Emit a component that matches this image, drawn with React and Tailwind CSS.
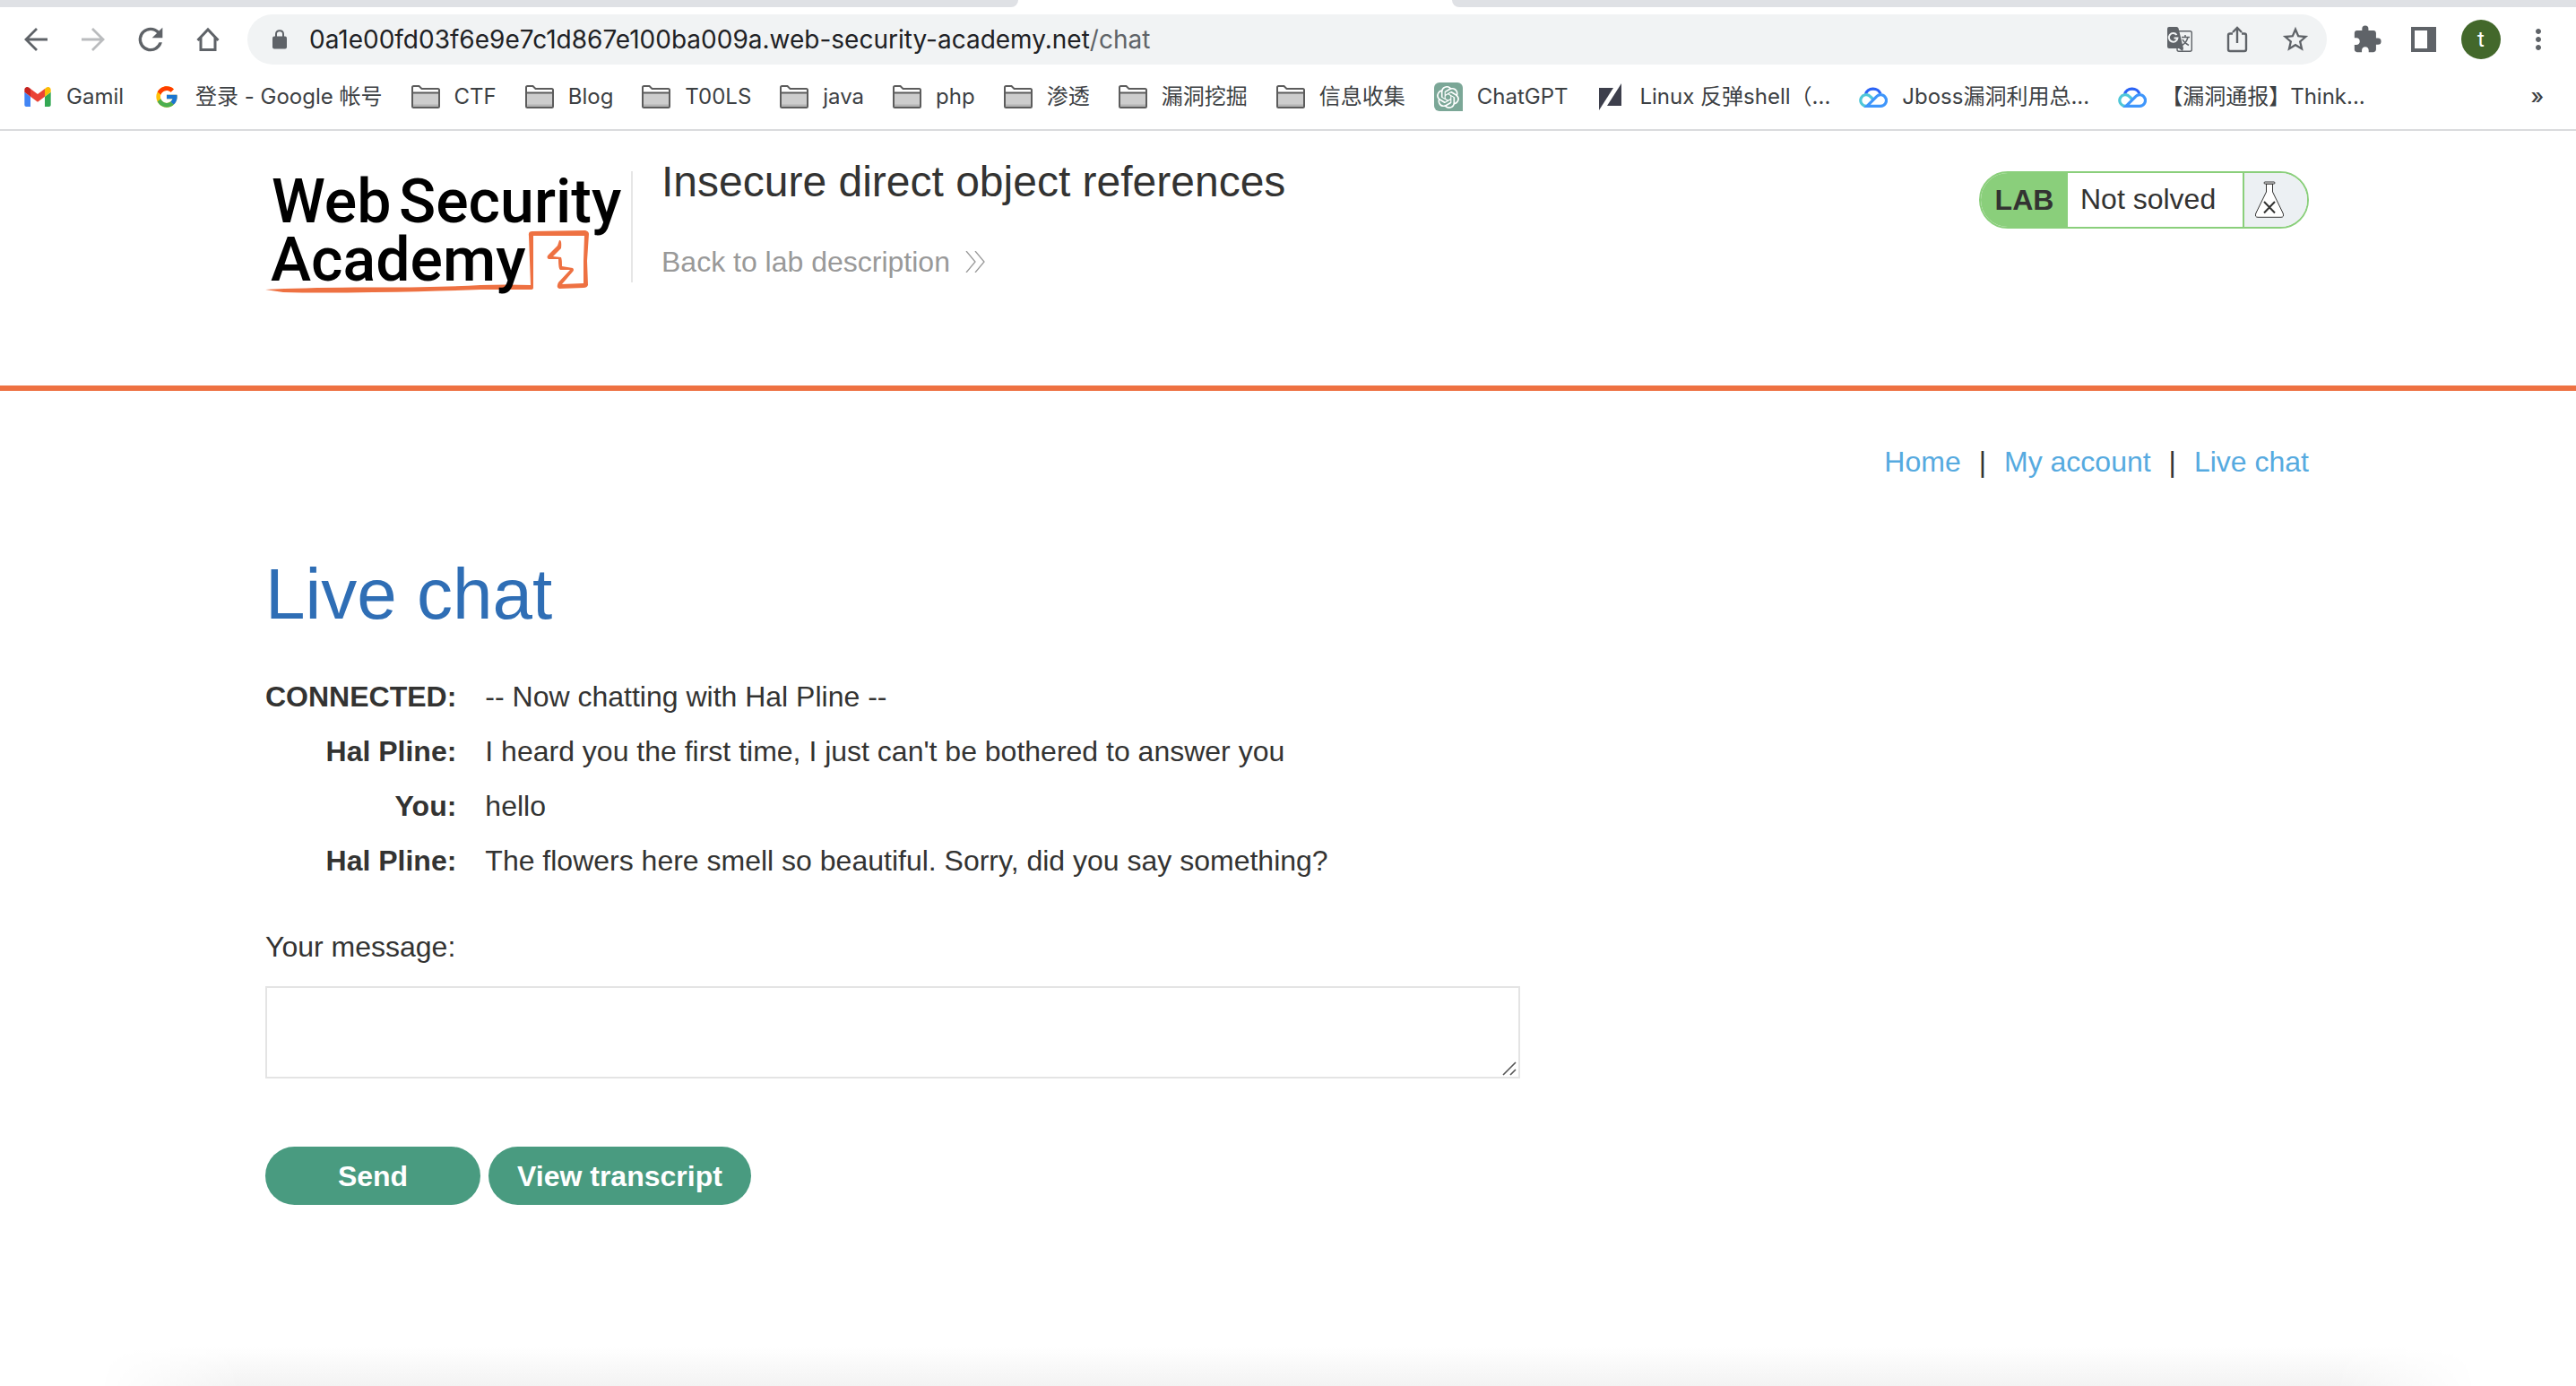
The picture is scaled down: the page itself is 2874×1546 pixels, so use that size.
import React from "react";
import { FcGoogle } from "react-icons/fc";
import { SiOpenai } from "react-icons/si";
import { MdStarBorder, MdExtension, MdMoreVert } from "react-icons/md";

function Arrow() {
  return (
    <svg className="size-8" viewBox="0 0 32 32" fill="none" stroke="currentColor" strokeWidth="2.800" aria-hidden="true">
      <path d="M29 16H5M17 4L5 16L17 28" />
    </svg>
  );
}

function Reload() {
  return (
    <svg className="size-8" viewBox="2.400 2.400 19.200 19.200" fill="currentColor" aria-hidden="true">
      <path d="M17.650 6.350A7.958 7.958 0 0 0 12 4a8 8 0 1 0 7.730 10h-2.080A6 6 0 1 1 12 6c1.660 0 3.140.690 4.220 1.780L13 11h7V4z" />
    </svg>
  );
}

function House() {
  return (
    <svg className="size-8" viewBox="0 0 32 32" fill="none" stroke="currentColor" strokeWidth="3" aria-hidden="true">
      <path d="M4.500 17L16 5L27.500 17M8 14V27.500H24V14" />
    </svg>
  );
}

function Lock() {
  return (
    <svg className="h-[22px] w-[18px]" viewBox="0 0 18 22" aria-hidden="true">
      <rect x="1" y="7.500" width="16" height="14" rx="2" fill="#5f6368" />
      <path d="M5 9V5Q5 1.200 9 1.200T13 5V9" fill="none" stroke="#5f6368" strokeWidth="2" />
    </svg>
  );
}

function Translate() {
  return (
    <svg className="size-8" viewBox="0 0 32 32" fill="none" aria-hidden="true">
      <rect x="13" y="6.700" width="16.300" height="22.600" rx="2" stroke="#5f6368" strokeWidth="1.400" />
      <path d="M4 2H12.500Q14 2 14.500 3.500L20 26L19 29L15 26H4Q2 26 2 24V4Q2 2 4 2Z" fill="#5f6368" />
      <path d="M12.500 11A4.800 4.800 0 1 0 13.400 14.500H9.500" stroke="#f1f3f4" strokeWidth="2" />
      <path d="M18 13.500H27M22 11V13.500M25 13.500Q23.500 19.500 18.500 22.500M19 16Q21 20 26 22.500" stroke="#5f6368" strokeWidth="1.500" />
    </svg>
  );
}

function Gmail() {
  return (
    <svg className="h-[22px] w-8" viewBox="52 42 88 66" aria-hidden="true">
      <path fill="#4285f4" d="M58 108h14V74L52 59v43c0 3.32 2.69 6 6 6" />
      <path fill="#34a853" d="M120 108h14c3.32 0 6-2.69 6-6V59l-20 15" />
      <path fill="#fbbc04" d="M120 48v26l20-15v-8c0-7.42-8.47-11.65-14.4-7.2" />
      <path fill="#ea4335" d="M72 74V48l24 18 24-18v26L96 92" />
      <path fill="#c5221f" d="M52 51v8l20 15V48l-5.6-4.2c-5.94-4.45-14.4-.22-14.4 7.2" />
    </svg>
  );
}

function Folder() {
  return (
    <svg className="h-[26px] w-8" viewBox="0 0 32 26" aria-hidden="true">
      <path d="M1 23.5V2.5Q1 1 2.500 1H8.500L11.500 4H29.500Q31 4 31 5.500V23.500Q31 25 29.500 25H2.500Q1 25 1 23.500Z" fill="#fff" stroke="#5c5c5c" strokeWidth="2" />
      <path d="M2 8H30V24H2Z" fill="#cdcdcd" />
      <path d="M2 21.500H30V24H2Z" fill="#b4b4b4" />
      <path d="M1 8.500H31" stroke="#5c5c5c" strokeWidth="2" />
      <path d="M2 25H30" stroke="#5c5c5c" strokeWidth="2" />
    </svg>
  );
}

function ChatGPT() {
  return (
    <span className="flex size-8 items-center justify-center rounded-md rounded-br-none bg-[#7ba797] text-white">
      <SiOpenai size={25} />
    </span>
  );
}

function Slash() {
  return (
    <svg className="size-8" viewBox="0 0 32 32" aria-hidden="true">
      <path d="M3 6H19L3 31Z" fill="#3d3f4c" />
      <path d="M28 1V26H12Z" fill="#3d3f4c" />
    </svg>
  );
}

function Cloud() {
  return (
    <svg className="h-6 w-8" viewBox="0 0 32 24" fill="none" strokeWidth="3.200" aria-hidden="true">
      <path d="M7.500 9A8.500 7.500 0 0 1 24 8.500" stroke="#2b63f6" />
      <path d="M15.500 14.500L13 12A6.300 6.300 0 1 0 8 22.300H12" stroke="#4fc7d8" />
      <path d="M9 22.300L19.500 11.800A6.300 6.300 0 1 1 24 22.300Z" stroke="#3f96fb" />
    </svg>
  );
}

function Share() {
  return (
    <svg className="size-8" viewBox="0 0 32 32" fill="none" stroke="#5f6368" strokeWidth="2.400" aria-hidden="true">
      <path d="M11 9.500H8Q6 9.500 6 11.500V27Q6 29 8 29H24Q26 29 26 27V11.500Q26 9.500 24 9.500H21" />
      <path d="M16 20V3M11 8L16 3L21 8" />
    </svg>
  );
}

function SidePanel() {
  return (
    <svg className="size-7" viewBox="0 0 28 28" aria-hidden="true">
      <path fillRule="evenodd" fill="#5f6368" d="M0 0H28V28H0ZM4 4V24H18V4Z" />
    </svg>
  );
}

function Flask() {
  return (
    <svg className="h-[42px] w-8" viewBox="0 0 32 42" fill="none" stroke="#333332" aria-hidden="true">
      <path d="M12.500 3V12L0.800 36Q-0.500 40.300 3 40.300H29Q32.500 40.300 31.200 36L19.500 12V3Z" fill="#fff" strokeWidth="1" />
      <rect x="10" y="1" width="12" height="2" rx="1" fill="#fff" strokeWidth="1" />
      <path d="M10 23L22 35.500M22 23L10 35.500" strokeWidth="2" />
    </svg>
  );
}

function AcademyLogo() {
  return (
    <svg className="h-[140px] w-[402px] shrink-0 overflow-visible" viewBox="0 0 402 140" role="img" aria-label="Web Security Academy">
      <g fill="#ee7142">
        <path d="M0 132Q40 130 100 129.500Q190 130 240 127Q270 126 296 127L294 72Q293 67 298 67L357 66Q361 67 361 70L359 100L360 127Q359 130 355 130L328 131Q324 130 327 124L340 110H329Q327 109 327 98L316 98Q313 96 316 93L326 83L328 77Q331 76 330 86L321 95L330 96Q331 98 331 106L343 108Q345 110 343 112L331 126L355 125L355 100L356 72L299 72L299 130Q299 132 296 132L240 132Q190 134 120 135Q60 136 20 135Z" />
      </g>
      <g className="font-[Roboto,sans-serif] text-[68px] font-medium" fill="#000">
        <text x="7" y="57">Web</text>
        <text x="149" y="57">Security</text>
        <text x="6" y="122">Academy</text>
      </g>
    </svg>
  );
}

const bookmarks = [
  { label: "Gamil", icon: <Gmail /> },
  { label: "登录 - Google 帐号", icon: <FcGoogle className="w-8" size={28} /> },
  { label: "CTF", icon: <Folder /> },
  { label: "Blog", icon: <Folder /> },
  { label: "T00LS", icon: <Folder /> },
  { label: "java", icon: <Folder /> },
  { label: "php", icon: <Folder /> },
  { label: "渗透", icon: <Folder /> },
  { label: "漏洞挖掘", icon: <Folder /> },
  { label: "信息收集", icon: <Folder /> },
  { label: "ChatGPT", icon: <ChatGPT /> },
  { label: "Linux 反弹shell（...", icon: <Slash /> },
  { label: "Jboss漏洞利用总...", icon: <Cloud /> },
  { label: "【漏洞通报】Think...", icon: <Cloud /> },
];

function Browser() {
  return (
    <div className="border-b-2 border-[#dadbdd] font-[Inter,'Noto_Sans_CJK_SC',sans-serif] text-[#3c4043]">
      <div className="flex h-2">
        <div className="w-[1136px] rounded-br-2xl bg-[#dfe1e5]" />
        <div className="w-[484px]" />
        <div className="flex-1 rounded-bl-2xl bg-[#dfe1e5]" />
      </div>
      <div className="flex h-[72px] items-center px-6 text-[#5f6368]">
        <div className="flex gap-8">
          <button aria-label="Back"><Arrow /></button>
          <button aria-label="Forward" className="rotate-180 text-[#babcbe]"><Arrow /></button>
          <button aria-label="Reload"><Reload /></button>
          <button aria-label="Home"><House /></button>
        </div>
        <div className="ml-7 flex h-14 flex-1 items-center rounded-full bg-[#f1f3f4] pr-[18px] pl-[27px]">
          <Lock />
          <div className="ml-6 flex-1 text-[28px] text-[#202124]">
            0a1e00fd03f6e9e7c1d867e100ba009a.web-security-academy.net<span className="text-[#5f6368]">/chat</span>
          </div>
          <div className="flex gap-8">
            <button aria-label="Translate"><Translate /></button>
            <button aria-label="Share"><Share /></button>
            <button aria-label="Bookmark"><MdStarBorder size={34} /></button>
          </div>
        </div>
        <div className="ml-7 flex items-center">
          <button aria-label="Extensions" className="mr-8"><MdExtension size={34} /></button>
          <button aria-label="Side panel" className="mr-7"><SidePanel /></button>
          <button className="mr-6 size-11 rounded-full bg-[#43682b] font-[Roboto] text-2xl text-white">t</button>
          <button aria-label="Menu"><MdMoreVert size={36} /></button>
        </div>
      </div>
      <nav aria-label="Bookmarks" className="flex h-16 items-center pb-2 pl-[26px] text-2xl">
        <div className="flex flex-1 gap-8">
          {bookmarks.map((b) => (
            <a key={b.label} href="#" className="flex items-center gap-4 whitespace-nowrap">
              {b.icon}
              {b.label}
            </a>
          ))}
        </div>
        <button aria-label="More bookmarks" className="pr-9 font-medium">»</button>
      </nav>
    </div>
  );
}

const messages = [
  ["CONNECTED:", "-- Now chatting with Hal Pline --"],
  ["Hal Pline:", "I heard you the first time, I just can't be bothered to answer you"],
  ["You:", "hello"],
  ["Hal Pline:", "The flowers here smell so beautiful. Sorry, did you say something?"],
];

export default function App() {
  return (
    <div className="flex min-h-screen flex-col bg-white font-['Liberation_Sans',Arial,sans-serif] text-[32px] leading-10 text-[#333332]">
      <Browser />
      <header className="border-b-6 border-[#ee7142] pr-0.5">
        <div className="mx-auto flex h-[284px] max-w-[2280px] items-start pt-[45px]">
          <AcademyLogo />
          <div className="ml-1.5 h-[124px] w-0.5 bg-[#e6e6e6]" />
          <div className="ml-8 flex-1">
            <h2 className="-mt-2 text-5xl leading-10">Insecure direct object references</h2>
            <a href="#" className="mt-[49px] flex items-center gap-4 text-[#999]">
              Back to lab description
              <svg className="size-6" viewBox="0 0 24 24" fill="none" stroke="#999" aria-hidden="true">
                <path d="M2 0L12 12L2 24M12 0L22 12L12 24" strokeWidth="1.300" />
              </svg>
            </a>
          </div>
          <div className="flex h-16 items-stretch overflow-hidden rounded-full border-2 border-[#8acf7b]">
            <span className="flex w-[97px] items-center justify-center bg-[#8acf7b] font-bold">LAB</span>
            <span className="flex w-[197px] items-center border-r-2 border-[#8acf7b] pb-0.5 pl-3.5">Not solved</span>
            <span className="flex w-[70px] items-center bg-[#ecf0f3] pl-3"><Flask /></span>
          </div>
        </div>
      </header>
      <main className="w-full flex-1 pt-[59px] pr-0.5">
        <div className="mx-auto max-w-[2280px]">
          <nav aria-label="Site" className="flex justify-end gap-5">
            <a href="#" className="text-[#56aae0]">Home</a>
            <span>|</span>
            <a href="#" className="text-[#56aae0]">My account</a>
            <span>|</span>
            <a href="#" className="text-[#56aae0]">Live chat</a>
          </nav>
          <h1 className="mt-[78px] text-[80px] leading-[100px] text-[#2f6eb5]">Live chat</h1>
          <table className="mt-[33px]">
            <tbody>
              {messages.map(([who, text], i) => (
                <tr key={i} className="h-[61px]">
                  <th scope="row" className="p-0 text-right">{who}</th>
                  <td className="p-0 pl-8">{text}</td>
                </tr>
              ))}
            </tbody>
          </table>
          <form className="mt-[46px]">
            <label htmlFor="message" className="block">Your message:</label>
            <div className="relative mt-6 w-[1400px] max-w-full">
              <textarea id="message" className="block h-[103px] w-full resize-none border-2 border-[#e4e4e4]" />
              <svg className="pointer-events-none absolute right-1 bottom-[3px] size-4" viewBox="0 0 16 16" stroke="#555" strokeWidth="1.600" aria-hidden="true">
                <path d="M1 15L15 1M9 15L15 9" />
              </svg>
            </div>
            <div className="mt-[76px] flex gap-[9px]">
              <button type="button" className="h-[65px] w-60 rounded-full bg-[#499b80] font-bold text-white">Send</button>
              <button type="button" className="h-[65px] rounded-full bg-[#499b80] px-8 font-bold text-white">View transcript</button>
            </div>
          </form>
        </div>
      </main>
      <div className="mx-[110px] h-11 bg-gradient-to-b from-white to-[#f3f3f3] [mask-image:linear-gradient(to_right,transparent,black_6%,black_94%,transparent)]" />
    </div>
  );
}
